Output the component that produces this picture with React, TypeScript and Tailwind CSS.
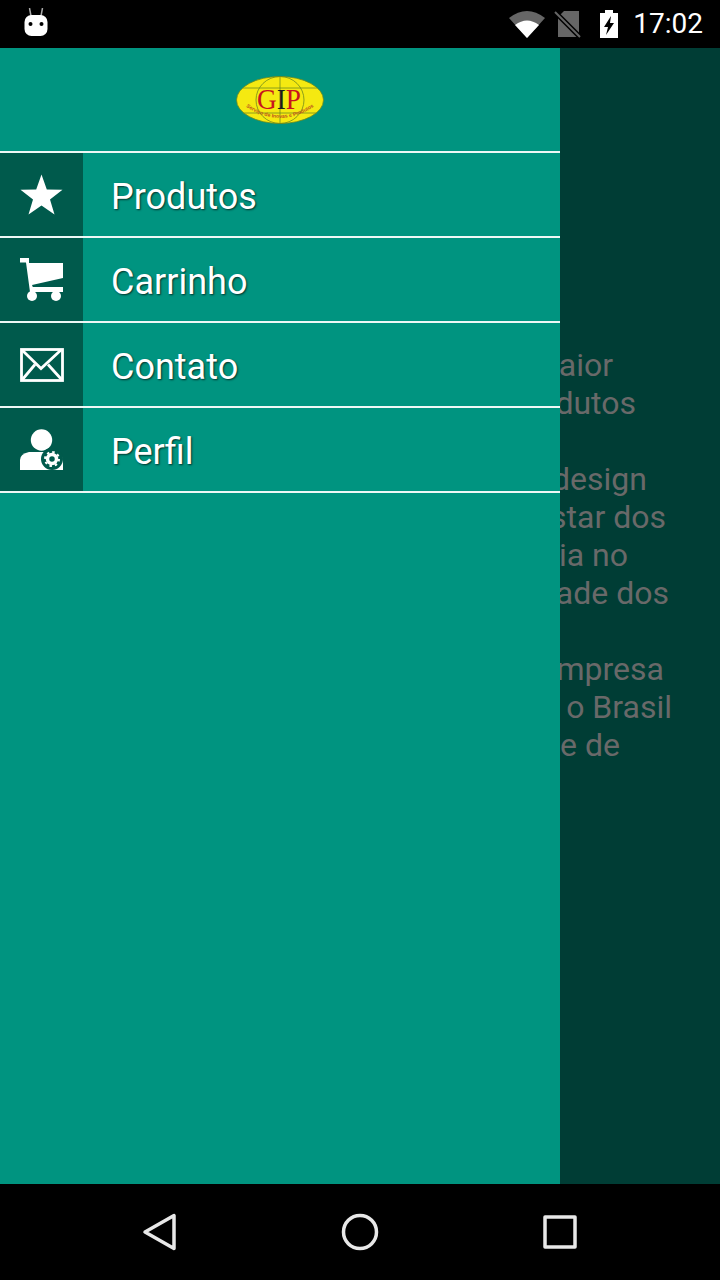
const navItems = [
  { label: "Produtos", icon: <StarIcon /> },
  { label: "Carrinho", icon: <CartIcon /> },
  { label: "Contato", icon: <MailIcon /> },
  { label: "Perfil", icon: <ProfileIcon /> },
];

// what is left visible of the page behind the drawer
const behindLines = [
  { text: "aior", cls: "pr-[107px]" },
  { text: "dutos", cls: "pr-[84px]" },
  { text: "", cls: "" },
  { text: "design", cls: "pr-[73px]" },
  { text: "star dos", cls: "pr-[54px]" },
  { text: "ia no", cls: "pr-[92px]" },
  { text: "ade dos", cls: "pr-[51px]" },
  { text: "", cls: "" },
  { text: "mpresa", cls: "pr-[56px]" },
  { text: "o Brasil", cls: "pr-[48px]" },
  { text: "e de", cls: "pr-[100px]" },
];

function StarIcon() {
  return (
    <svg width="44" height="44" viewBox="0 0 44 44" fill="#fff">
      <path d="M21.500 1.500 26.800 16.500 42.500 16.800 30 26.400 34.500 41.500 21.500 32.600 8.500 41.500 13 26.400 0.500 16.800 16.200 16.500Z" />
    </svg>
  );
}

function CartIcon() {
  return (
    <svg width="44" height="44" viewBox="0 0 44 44" fill="#fff">
      <path d="M0 0H9V5H43V20L12 27 12.800 29H43V34H10L6 4.500H0Z" />
      <circle cx="12" cy="38" r="5" />
      <circle cx="36" cy="38" r="5" />
    </svg>
  );
}

function MailIcon() {
  return (
    <svg width="44" height="34" viewBox="0 0 44 34" fill="none" stroke="#fff" strokeWidth="2.800">
      <rect x="1.500" y="1.500" width="41" height="31" />
      <path d="M2 2 21 20.500 41 2" />
      <path d="M2 32 15 16.500M42 32 28 16.500" />
    </svg>
  );
}

function ProfileIcon() {
  return (
    <svg width="44" height="42" viewBox="0 0 44 42">
      <circle cx="21.500" cy="11" r="10.700" fill="#fff" />
      <path d="M0 41V31Q0 25 9 23H33Q43 25 43 31V41Z" fill="#fff" />
      <circle cx="32" cy="30" r="11" fill="#005a4c" />
      <circle cx="32" cy="30" r="4.500" fill="none" stroke="#fff" strokeWidth="3.500" />
      <circle cx="32" cy="30" r="7" fill="none" stroke="#fff" strokeWidth="2" strokeDasharray="2.500 3" />
    </svg>
  );
}

function Logo() {
  return (
    <svg width="88" height="48" viewBox="0 0 88 48">
      <ellipse cx="44" cy="24" rx="43.500" ry="23.500" fill="#f5e911" />
      <g fill="none" stroke="#6f8a1e" strokeWidth="0.800">
        <ellipse cx="44" cy="24" rx="43.500" ry="23.500" />
        <ellipse cx="44" cy="24" rx="24" ry="23.500" />
        <path d="M44 0V48M7 12H81M7 37H81" />
      </g>
      <text
        x="21"
        y="33"
        fontFamily="'Liberation Serif', serif"
        fontSize="29"
        textLength="44"
        lengthAdjust="spacingAndGlyphs"
        fill="#c8141e"
      >
        G<tspan fill="#1c1c1c">I</tspan>P
      </text>
      <path id="logo-arc" d="M5 27Q44 57 83 27" fill="none" />
      <text fontFamily="'Liberation Sans', sans-serif" fontSize="5.200" fontWeight="bold" fill="#c0561e">
        <textPath href="#logo-arc" startOffset="50%" textAnchor="middle">
          Serviço de Inovas e Produtos
        </textPath>
      </text>
    </svg>
  );
}

function StatusBar() {
  return (
    <div className="flex h-12 items-center justify-between bg-black pl-6 pr-[17px]">
      <svg width="24" height="28" viewBox="0 0 24 28" className="mb-1">
        <path d="M5.500 0 7 8M18.500 0 17 8" stroke="#aaa" strokeWidth="1.500" />
        <rect x="0.500" y="7" width="23" height="21" rx="7" fill="#fff" />
        <circle cx="6.500" cy="16" r="2" fill="#000" />
        <circle cx="17.500" cy="16" r="2" fill="#000" />
      </svg>
      <div className="flex items-center">
        <svg width="36" height="28" viewBox="0 0 36 28" className="mr-[9px]">
          <path d="M0 8Q18 -6 36 8L18 28Z" fill="#666" />
          <path d="M6 15Q18 6 30 15L18 28Z" fill="#fff" />
        </svg>
        <svg width="28" height="28" viewBox="0 0 28 28" className="mr-[18px]">
          <path d="M10 1H25V27H4V7Z" fill="#666" />
          <path d="M0 1 27 28" stroke="#000" strokeWidth="5" />
          <path d="M1 2 26 27" stroke="#666" strokeWidth="2" />
        </svg>
        <svg width="18" height="28" viewBox="0 0 18 28" className="mr-[15px]">
          <path d="M5 0H13V3H18V28H0V3H5Z" fill="#fff" />
          <path d="M11 6 4 17H8L6 25 14 13H10Z" fill="#000" />
        </svg>
        <span className="text-[28px] leading-none text-white">17:02</span>
      </div>
    </div>
  );
}

function NavBar() {
  return (
    <div className="flex h-24 items-center justify-center bg-black">
      <div className="flex w-[200px] justify-center">
        <svg width="36" height="38" viewBox="0 0 36 38" fill="none" stroke="#e8e8e8" strokeWidth="3.500" strokeLinejoin="round">
          <path d="M32 2.500V35.500L3 19Z" />
        </svg>
      </div>
      <div className="flex w-[200px] justify-center">
        <svg width="38" height="38" viewBox="0 0 38 38" fill="none" stroke="#e8e8e8" strokeWidth="3.500">
          <circle cx="19" cy="19" r="16.500" />
        </svg>
      </div>
      <div className="flex w-[200px] justify-center">
        <svg width="34" height="34" viewBox="0 0 34 34" fill="none" stroke="#e8e8e8" strokeWidth="3.500" strokeLinejoin="round">
          <rect x="2" y="2" width="30" height="30" />
        </svg>
      </div>
    </div>
  );
}

export default function App() {
  return (
    <div className="flex h-[1280px] w-[720px] flex-col overflow-hidden bg-black font-['Roboto',sans-serif]">
      <StatusBar />
      <div className="flex flex-1 overflow-hidden">
        <aside className="w-[560px] shrink-0 bg-[#009480]">
          <div className="flex h-[103px] items-center justify-center">
            <Logo />
          </div>
          <div className="h-0.5 bg-[#eef8f6]" />
          {navItems.map((item) => (
            <div key={item.label}>
              <div className="flex h-[83px] items-center">
                <div className="flex h-full w-[83px] items-center justify-center bg-[#005a4c]">{item.icon}</div>
                <span className="pl-7 pt-1 text-[36px] leading-none text-white [text-shadow:1px_1px_2px_#00332b]">
                  {item.label}
                </span>
              </div>
              <div className="h-0.5 bg-[#eef8f6]" />
            </div>
          ))}
        </aside>
        <div className="flex-1 overflow-hidden bg-[#003d35] pt-[298px] text-[32px] leading-[38px] whitespace-nowrap text-[#696969]">
          {behindLines.map((line, i) => (
            <div key={i} className={`flex h-[38px] justify-end ${line.cls}`}>
              {line.text}
            </div>
          ))}
        </div>
      </div>
      <NavBar />
    </div>
  );
}
